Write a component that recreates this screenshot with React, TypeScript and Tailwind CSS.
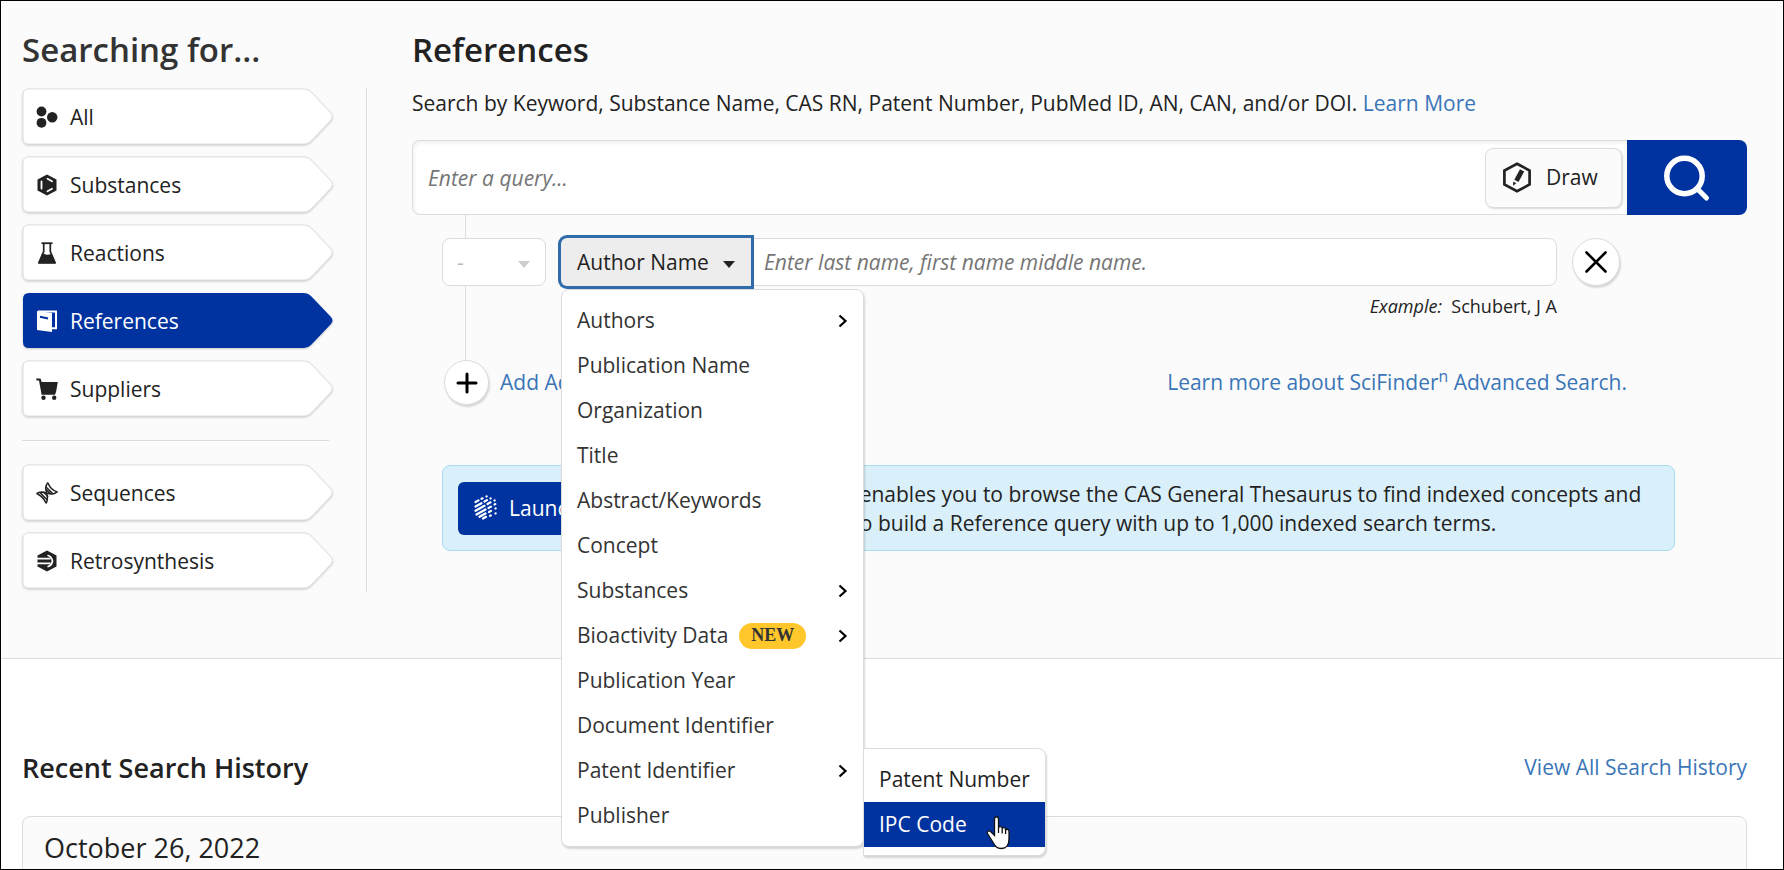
import React from 'react';

const navItems = [
  { id: 'all', label: 'All', icon: AllIcon },
  { id: 'substances', label: 'Substances', icon: SubstancesIcon },
  { id: 'reactions', label: 'Reactions', icon: ReactionsIcon },
  { id: 'references', label: 'References', icon: ReferencesIcon },
  { id: 'suppliers', label: 'Suppliers', icon: SuppliersIcon }
];

const toolItems = [
  { id: 'sequences', label: 'Sequences', icon: SequencesIcon },
  { id: 'retrosynthesis', label: 'Retrosynthesis', icon: RetrosynthesisIcon }
];

type FieldOption = {
  label: string;
  nested?: boolean;
  isNew?: boolean;
  children?: string[];
};

const fieldOptions: FieldOption[] = [
  { label: 'Authors', nested: true },
  { label: 'Publication Name' },
  { label: 'Organization' },
  { label: 'Title' },
  { label: 'Abstract/Keywords' },
  { label: 'Concept' },
  { label: 'Substances', nested: true },
  { label: 'Bioactivity Data', nested: true, isNew: true },
  { label: 'Publication Year' },
  { label: 'Document Identifier' },
  { label: 'Patent Identifier', nested: true, children: ['Patent Number', 'IPC Code'] },
  { label: 'Publisher' }
];

function AllIcon() {
  return (
    <svg viewBox="0 0 22 22" className="size-[22px]" fill="currentColor" aria-hidden="true">
      <circle cx="5.5" cy="5.5" r="4.9" />
      <circle cx="5.5" cy="16.8" r="4.9" />
      <circle cx="16.2" cy="11.2" r="5.2" />
    </svg>
  );
}

function SubstancesIcon() {
  return (
    <svg viewBox="0 0 22 22" className="size-[22px]" aria-hidden="true">
      <path d="M11 .5l9.5 5v11l-9.5 5-9.5-5v-11z" fill="currentColor" />
      <path d="M5.5 7.5v7M11.500 4.800l4.500 2.500M11.500 17.200l4.500-2.500" stroke="#fff" strokeWidth="1.8" fill="none" strokeLinecap="round" />
    </svg>
  );
}

function ReactionsIcon() {
  return (
    <svg viewBox="0 0 22 22" className="size-[22px]" aria-hidden="true">
      <path d="M5.5 1.2h11" stroke="currentColor" strokeWidth="1.8" />
      <path d="M7.7 1.5v8L3 20.5h16L14.3 9.5v-8" fill="none" stroke="currentColor" strokeWidth="1.7" />
      <path d="M6.2 11.5c2-.6 3.5 1.3 5 1.3s2.5-.8 4.2-.3L19.8 21.8H2.2z" fill="currentColor" />
    </svg>
  );
}

function ReferencesIcon() {
  return (
    <svg viewBox="0 0 22 22" className="size-[22px]" aria-hidden="true">
      <path d="M1 1l15 2v19L1 20z" fill="currentColor" />
      <path d="M2 1.4h18v16.8h-4" fill="none" stroke="currentColor" strokeWidth="2" />
      <path d="M4 6.8l8 1.7" stroke="#0033a0" strokeWidth="2" />
    </svg>
  );
}

function SuppliersIcon() {
  return (
    <svg viewBox="0 0 22 22" className="size-[22px]" fill="currentColor" aria-hidden="true">
      <path d="M.3.5h4.2l1.2 3.500h16.1l-1.700 9.700L19 16.700H5.600L3 2.400H.3z" />
      <circle cx="7.5" cy="19.7" r="2.2" />
      <circle cx="18.2" cy="19.7" r="2.2" />
    </svg>
  );
}

function SequencesIcon() {
  return (
    <svg viewBox="0 0 22 22" className="size-[22px]" fill="none" stroke="currentColor" strokeWidth="1.500" aria-hidden="true">
      <path d="M.5 11.700C8 6 13 16.500 21.500 9.700" />
      <path d="M9.800 21.500C15.500 14 5.500 8 12 .5" />
      <path d="M.8 11.500C5 13.500 8 16.500 10 21M12 1C13.500 5 16.500 8.500 21.200 9.900M3.800 10.300l7.700 8M7.300 9.800l4.900 4.900M10 5l7.200 7M10.100 7.500l4.400 4.400" />
    </svg>
  );
}

function RetrosynthesisIcon() {
  return (
    <svg viewBox="0 0 22 22" className="size-[22px]" aria-hidden="true">
      <path d="M11 .5l9.500 5v11l-9.500 5-9.500-5v-11z" fill="currentColor" />
      <path d="M0 8.600h14.500M0 13.400h14.500" stroke="#fff" strokeWidth="1.700" />
      <path d="M11.500 5.200c2 .6 4.500 3 5 5.800-.5 2.800-3 5.200-5 5.800" fill="none" stroke="#fff" strokeWidth="1.700" />
    </svg>
  );
}

function DrawIcon() {
  return (
    <svg viewBox="0 0 30 32" className="h-8 w-[30px]" aria-hidden="true">
      <path d="M15 1.800l12.600 6.700v14L15 29.200 2.400 22.500v-14z" fill="none" stroke="#222" strokeWidth="2.700" />
      <path d="M18 7.300l4.200 2.300-5.700 10.400-4.200-2.300z" fill="#222" />
      <path d="M11.300 19.500l3 1.700-3.300 2.600z" fill="#222" />
    </svg>
  );
}

function ConceptIcon() {
  return (
    <svg viewBox="0 0 24 26" className="h-[26px] w-6 shrink-0" stroke="#fff" strokeWidth="2.200" strokeLinecap="round" aria-hidden="true">
      <path d="M1.500 7l3-1.600M7.500 3.800l1-.5M12.500 1.500l.1-.1M1.500 11.500l6-3.300M10.500 6.500l2.500-1.400M16.500 3.500l.1-.1M1.500 15.800l9-5M13.500 9l3-1.700M20.500 5.500l.1-.1M2.500 19.500l9-5M14.500 13l2.500-1.400M20.500 9.500l.8-.4M5.500 21.800l6-3.300M15 17l2-1.100M21.500 13.500l.1-.1M9 23.500l3-1.700M16 20.800l.8-.4M21.500 18.500l.1-.1" />
    </svg>
  );
}

function PointerIcon() {
  return (
    <svg viewBox="0 0 26 34" className="h-[34px] w-[26px]" aria-hidden="true">
      <path
        d="M9.500 3c0-3 4-3 4 0v9c0-2 3.500-2 3.700.3v.7c.3-2 3.300-1.700 3.400.5v.7c.6-1.500 3.400-1.200 3.400 1.300v7c0 7-3 10-7.500 10-5 0-6.500-2.500-9-7l-5-8c-1.200-2 1.500-3.500 3-2l4 4z"
        fill="#fff"
        stroke="#111"
        strokeWidth="1.300"
      />
      <path d="M13.500 12v5M17.200 13v4.500M20.600 14v4" stroke="#111" strokeWidth="1.300" />
    </svg>
  );
}

type NavButtonProps = {
  label: string;
  icon: React.ComponentType;
  active?: boolean;
};

function NavButton({ label, icon: Icon, active = false }: NavButtonProps) {
  return (
    <button
      type="button"
      aria-current={active ? 'page' : undefined}
      className={`relative flex h-[58px] w-full items-center gap-3 px-[14px] text-left ${active ? 'text-white' : 'text-[#222]'}`}
    >
      <svg viewBox="0 0 312 58" className="absolute inset-0 size-full overflow-visible" aria-hidden="true">
        <path
          d="M7 1H282Q286 1 289 4L309 25Q312 28.500 309 32L289 53Q286 56 282 56H7Q1 56 1 50V7Q1 1 7 1Z"
          fill={active ? '#0033a0' : '#fff'}
          stroke={active ? 'none' : '#e0e0e0'}
          className="drop-shadow-[0_1px_1px_rgba(0,0,0,0.2)]"
        />
      </svg>
      <span className="relative">
        <Icon />
      </span>
      <span className="relative">{label}</span>
    </button>
  );
}

function Chevron() {
  return (
    <svg viewBox="0 0 10 14" className="h-[14px] w-[10px]" fill="none" stroke="#000" strokeWidth="2.200" aria-hidden="true">
      <path d="M1.500 1.500L7.500 7l-6 5.500" />
    </svg>
  );
}

function FieldMenu() {
  return (
    <ul className="absolute top-[51px] left-0 z-20 w-[303px] rounded-lg border border-[#dcdcdc] bg-white py-2 text-[#333] shadow-[1px_2px_2px_rgba(0,0,0,0.15)]">
      {fieldOptions.map((option) => (
        <li key={option.label} className="relative">
          <button type="button" className="flex h-[45px] w-full items-center px-[15px] text-left">
            {option.label}
            {option.isNew && (
              <span className="ml-[11px] h-[26px] rounded-full bg-[#ffc72c] px-3 font-['Liberation_Serif',serif] text-lg leading-6 font-bold text-[#333]">
                NEW
              </span>
            )}
            {option.nested && (
              <span className="ml-auto">
                <Chevron />
              </span>
            )}
          </button>
          {option.children && (
            <ul className="absolute top-0 left-full w-[183px] rounded-r-lg border border-[#dcdcdc] bg-white py-2 text-[#222] shadow-[1px_2px_2px_rgba(0,0,0,0.15)]">
              {option.children.map((child) => (
                <li key={child} className="relative">
                  <button
                    type="button"
                    className={`flex h-[45px] w-full items-center px-[15px] text-left whitespace-nowrap ${
                      child === 'IPC Code' ? 'bg-[#0033a0] text-white' : ''
                    }`}
                  >
                    {child}
                  </button>
                  {child === 'IPC Code' && (
                    <span className="pointer-events-none absolute top-[14px] right-[34px]">
                      <PointerIcon />
                    </span>
                  )}
                </li>
              ))}
            </ul>
          )}
        </li>
      ))}
    </ul>
  );
}

export default function App() {
  return (
    <div className="h-screen overflow-hidden border border-black bg-white font-['Open_Sans',sans-serif] text-[21px] leading-[29px] text-[#222]">
      <section className="flex border-b border-[#dcdcdc] bg-[#fbfbfb] pt-[31px] pr-9 pb-[66px] pl-[21px]">
        <aside className="w-[345px] shrink-0">
          <h2 className="text-[33px] leading-9 font-semibold text-[#333]">Searching for...</h2>
          <div className="mt-5 border-r border-[#dcdcdc] pr-8 pb-[2px]">
            <nav className="flex flex-col gap-[10px]">
              {navItems.map((item) => (
                <NavButton key={item.id} label={item.label} icon={item.icon} active={item.id === 'references'} />
              ))}
            </nav>
            <hr className="mt-[22px] mr-[5px] mb-[23px] border-[#dcdcdc]" />
            <nav className="flex flex-col gap-[10px]">
              {toolItems.map((item) => (
                <NavButton key={item.id} label={item.label} icon={item.icon} />
              ))}
            </nav>
          </div>
        </aside>

        <main className="ml-[45px] min-w-0 flex-1">
          <h1 className="text-[33px] leading-9 font-semibold">References</h1>
          <p className="mt-[21px]">
            Search by Keyword, Substance Name, CAS RN, Patent Number, PubMed ID, AN, CAN, and/or DOI.{' '}
            <a href="#learn-more" className="text-[#3a75b8]">Learn More</a>
          </p>

          <form className="mt-[22px]" onSubmit={(e) => e.preventDefault()}>
            <div className="flex h-[75px]">
              <div className="flex min-w-0 flex-1 items-center rounded-l-lg border border-r-0 border-[#dcdcdc] bg-white pr-[5px] shadow-[inset_1px_2px_4px_rgba(0,0,0,0.06)]">
                <input
                  type="text"
                  aria-label="Query"
                  placeholder="Enter a query..."
                  className="h-full min-w-0 flex-1 bg-transparent px-[15px] italic outline-none placeholder:text-[#757575]"
                />
                <button
                  type="button"
                  className="flex h-[60px] w-[137px] items-center gap-[14px] rounded-lg border border-[#dcdcdc] bg-[#fbfbfb] pl-4 shadow-[1px_1px_2px_rgba(0,0,0,0.15)]"
                >
                  <DrawIcon />
                  Draw
                </button>
              </div>
              <button type="submit" aria-label="Search" className="flex w-[120px] items-center justify-center rounded-r-lg bg-[#0033a0]">
                <svg viewBox="0 0 48 48" className="size-12" fill="none" stroke="#fff" strokeWidth="5.500" strokeLinecap="round" aria-hidden="true">
                  <circle cx="21.5" cy="22" r="17.700" />
                  <path d="M35 35.500l8.500 8.500" strokeWidth="5" />
                </svg>
              </button>
            </div>

            <div className="relative pl-[30px]">
              <div className="absolute top-0 left-[53px] h-[146px] w-px bg-[#dcdcdc]" />
              <div className="relative z-10 flex pt-[23px]">
                <div className="relative h-12 w-[104px]">
                  <select
                    aria-label="Operator"
                    disabled
                    className="size-full appearance-none rounded-lg border border-[#dcdcdc] bg-white px-[14px] text-[#bbb]"
                  >
                    <option>-</option>
                  </select>
                  <svg viewBox="0 0 12 7" className="absolute top-[23px] right-4 h-[7px] w-3" aria-hidden="true">
                    <path d="M0 0h12L6 7z" fill="#ccc" />
                  </svg>
                </div>
                <div className="relative ml-[15px] flex h-12 min-w-0 flex-1">
                  <button
                    type="button"
                    aria-haspopup="true"
                    aria-expanded="true"
                    className="relative z-10 flex h-full w-[190px] items-center justify-between rounded-l-md bg-[#ededed] px-4 whitespace-nowrap ring-3 ring-[#2f6ca9]"
                  >
                    Author Name
                    <svg viewBox="0 0 12 7" className="mt-1 h-[7px] w-3" aria-hidden="true">
                      <path d="M0 0h12L6 7z" fill="#222" />
                    </svg>
                  </button>
                  <input
                    type="text"
                    aria-label="Author name"
                    placeholder="Enter last name, first name middle name."
                    className="h-full min-w-0 flex-1 rounded-r-lg border border-[#dcdcdc] bg-white px-3 italic outline-none placeholder:text-[#757575]"
                  />
                  <FieldMenu />
                </div>
                <button
                  type="button"
                  aria-label="Remove field"
                  className="mr-[127px] ml-[15px] flex size-12 items-center justify-center rounded-full border border-[#dcdcdc] bg-white shadow-[1px_2px_2px_rgba(0,0,0,0.15)]"
                >
                  <svg viewBox="0 0 22 22" className="size-[22px]" stroke="#000" strokeWidth="2.600" strokeLinecap="round" aria-hidden="true">
                    <path d="M1.500 1.500l19 19M20.500 1.500l-19 19" />
                  </svg>
                </button>
              </div>
              <p className="mt-2 mr-[190px] text-right text-lg leading-6">
                <em>Example:</em>&nbsp; Schubert, J A
              </p>

              <div className="relative mt-[42px] mr-[120px] flex items-center justify-between">
                <button type="button" className="flex items-center gap-[11px] pl-[2px] text-[#3a75b8]">
                  <span className="flex size-[45px] items-center justify-center rounded-full border border-[#dcdcdc] bg-white shadow-[1px_2px_2px_rgba(0,0,0,0.15)]">
                    <svg viewBox="0 0 22 22" className="size-[22px]" stroke="#000" strokeWidth="3" strokeLinecap="round" aria-hidden="true">
                      <path d="M11 2v18M2 11h18" />
                    </svg>
                  </span>
                  Add Advanced Field
                </button>
                <a href="#advanced-search" className="text-[#3a75b8]">
                  Learn more about SciFinder<sup>n</sup> Advanced Search.
                </a>
              </div>

              <div className="mt-[60px] mr-[72px] flex items-center gap-[18px] rounded-lg border border-[#a9def0] bg-[#d9effa] px-[15px] py-3">
                <button type="button" className="flex h-[53px] shrink-0 items-center gap-[11px] rounded-md bg-[#0033a0] px-4 whitespace-nowrap text-white">
                  <ConceptIcon />
                  Launch Lexicon
                </button>
                <p className="flex-1 pt-[2px]">
                  The CAS Lexicon enables you to browse the CAS General Thesaurus to find indexed concepts and substances and to build a Reference query with up to 1,000 indexed search terms.
                </p>
              </div>
            </div>
          </form>
        </main>
      </section>

      <section className="pt-[94px] pr-9 pl-[21px]">
        <div className="flex items-center justify-between">
          <h2 className="text-[27px] leading-7 font-semibold">Recent Search History</h2>
          <a href="#history" className="text-[#3a75b8]">View All Search History</a>
        </div>
        <div className="mt-[34px] h-32 rounded-lg border border-[#dcdcdc] bg-[#fbfbfb] px-[21px] pt-[15px]">
          <h3 className="text-[27px] leading-8">October 26, 2022</h3>
        </div>
      </section>
    </div>
  );
}
